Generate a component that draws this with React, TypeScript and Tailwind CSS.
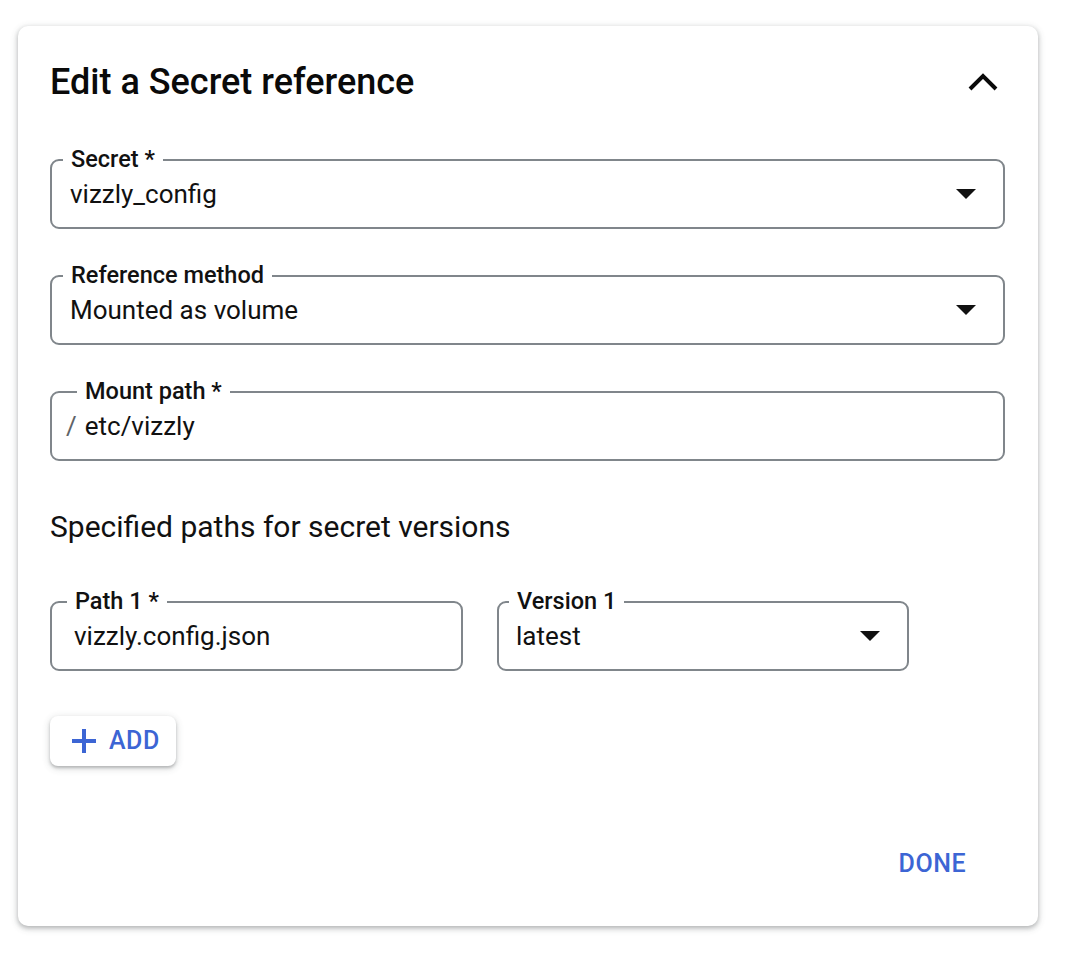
import React from 'react';

function DropArrow() {
  return (
    <svg width="20" height="10" viewBox="0 0 20 10" className="shrink-0">
      <path d="M0 0 L10 10 L20 0 Z" fill="#111111" />
    </svg>
  );
}

interface FieldProps {
  label: string;
  value: string;
  select?: boolean;
  prefix?: string;
  labelLeft: string;
  padLeft: string;
  className?: string;
}

function OutlinedField({ label, value, select, prefix, labelLeft, padLeft, className }: FieldProps) {
  return (
    <div
      className={`relative h-[70px] rounded-[9px] border-2 border-[#80868b] flex items-center pr-[27px] ${padLeft} ${className ?? ''}`}
    >
      <span
        className={`absolute top-[-2px] -translate-y-1/2 bg-white px-[8px] text-[23.5px] leading-[22px] font-medium text-[#111111] ${labelLeft}`}
      >
        {label}
      </span>
      {prefix && <span className="text-[26px] text-[#5f6368] mr-[8px]">{prefix}</span>}
      <span className="flex-1 text-[26px] leading-[28px] text-[#111111]">{value}</span>
      {select && <DropArrow />}
    </div>
  );
}

export default function App() {
  return (
    <div className="min-h-screen bg-white pt-[26px] pl-[18px]" style={{ fontFamily: 'Roboto, "Noto Sans", sans-serif' }}>
      <div className="w-[1020px] h-[900px] rounded-[10px] bg-white shadow-[0_2px_4px_0_rgba(60,64,67,0.3),0_2px_6px_2px_rgba(60,64,67,0.12)] px-[32px] pt-[36px] flex flex-col">
        <div className="flex items-center justify-between">
          <h1 className="text-[36px] leading-[40px] font-medium text-[#0a0a0a]">Edit a Secret reference</h1>
          <svg width="30" height="20" viewBox="0 0 30 20" className="mr-[8px]">
            <path d="M2 17 L15 4 L28 17" fill="none" stroke="#0a0a0a" strokeWidth="4" />
          </svg>
        </div>

        <div className="mt-[57px] flex flex-col gap-[46px] w-[955px]">
          <OutlinedField label="Secret *" value="vizzly_config" select labelLeft="left-[11px]" padLeft="pl-[18px]" />
          <OutlinedField label="Reference method" value="Mounted as volume" select labelLeft="left-[11px]" padLeft="pl-[18px]" />
          <OutlinedField label="Mount path *" value="etc/vizzly" prefix="/" labelLeft="left-[25px]" padLeft="pl-[14px]" />
        </div>

        <h2 className="mt-[50px] text-[30px] leading-[32px] text-[#111111]">Specified paths for secret versions</h2>

        <div className="mt-[58px] flex gap-[34px]">
          <OutlinedField label="Path 1 *" value="vizzly.config.json" labelLeft="left-[15px]" padLeft="pl-[22px]" className="w-[413px]" />
          <OutlinedField label="Version 1" value="latest" select labelLeft="left-[10px]" padLeft="pl-[17px]" className="w-[412px]" />
        </div>

        <div className="mt-[45px]">
          <button className="h-[50px] w-[126px] rounded-[8px] bg-white shadow-[0_2px_3px_0_rgba(60,64,67,0.3),0_2px_6px_2px_rgba(60,64,67,0.12)] flex items-center pl-[21px] gap-[12px] text-[#3c65d4]">
            <svg width="26" height="26" viewBox="0 0 26 26">
              <path d="M13 1 V25 M1 13 H25" stroke="#3c65d4" strokeWidth="4" />
            </svg>
            <span className="text-[25px] leading-[28px] font-medium tracking-[0.5px]">ADD</span>
          </button>
        </div>

        <div className="mt-auto mb-[48px] flex justify-end pr-[40px]">
          <span className="text-[25px] leading-[28px] font-medium tracking-[0.5px] text-[#3c65d4]">DONE</span>
        </div>
      </div>
    </div>
  );
}
